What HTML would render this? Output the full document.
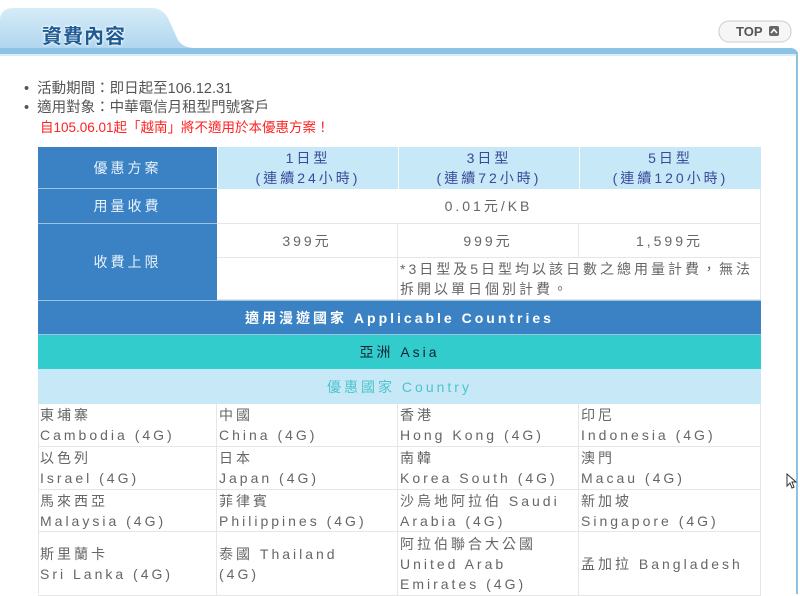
<!DOCTYPE html>
<html><head><meta charset="utf-8"><style>
*{margin:0;padding:0;box-sizing:border-box}
body{width:800px;height:594px;overflow:hidden;background:#fff;font-family:"Liberation Sans","Noto Sans CJK TC",sans-serif;position:relative}
.a{position:absolute}
.c{position:absolute;display:flex;align-items:center;justify-content:center;text-align:center;font-size:14px;letter-spacing:3px;line-height:20px;color:#666}
.l{justify-content:flex-start;text-align:left;padding-left:2px}
.db{background:#3a82c4;color:#e8f2fb}
.lb{background:#c7e8f7;color:#3a4a9a}
.bd{border-right:1px solid #e6e6e6;border-bottom:1px solid #e6e6e6}
</style></head><body>
<svg class="a" style="left:0;top:0" width="800" height="70">
<defs><linearGradient id="g" x1="0" y1="0" x2="0" y2="1"><stop offset="0" stop-color="#d6ecf8"/><stop offset="1" stop-color="#a9d2ec"/></linearGradient></defs>
<path d="M0 55 L0 20 Q0 8 14 8 L152 8 Q162 8 168 18 L178 40 Q183 48 195 48 L200 48 L200 55 Z" fill="url(#g)"/>
<path d="M0 48 L790 48 Q798 48 798 56 L0 56 Z" fill="#8cc2e2"/>
<rect x="0" y="54" width="796" height="2" fill="#d9ecf7"/>
<rect x="719" y="21" width="72" height="21" rx="10" fill="#f6f6f6" stroke="#ccc"/>
<text x="736" y="36" font-family="Liberation Sans" font-weight="bold" font-size="13" fill="#555">TOP</text>
<rect x="769" y="26" width="10" height="10" rx="2" fill="#666"/>
<path d="M771 33 L774 29.5 L777 33" stroke="#fff" stroke-width="1.6" fill="none"/>
</svg>
<div class="a" style="left:796px;top:52px;width:2px;height:542px;background:#8cc2e2"></div>
<div class="a" style="left:42px;top:20px;font-size:20px;font-weight:bold;color:#1e5a94;letter-spacing:1px;text-shadow:0 0 2px #fff,0 0 3px #fff">資費內容</div>
<div class="a" style="left:24px;top:80px;font-size:14.5px;color:#555;line-height:19px">
<div>•&nbsp;&nbsp;活動期間：即日起至106.12.31</div>
<div>•&nbsp;&nbsp;適用對象：中華電信月租型門號客戶</div>
<div style="color:#f22;font-size:13.5px;padding-left:16px">自105.06.01起「越南」將不適用於本優惠方案！</div>
</div>
<div class="c db" style="left:38px;top:147px;width:179px;height:42px;border-bottom:1px solid #9cc4e6">優惠方案</div>
<div class="c lb" style="left:217px;top:147px;width:181px;height:42px;border-left:1px solid #fff">1日型<br>(連續24小時)</div>
<div class="c lb" style="left:398px;top:147px;width:181px;height:42px;border-left:1px solid #fff">3日型<br>(連續72小時)</div>
<div class="c lb" style="left:579px;top:147px;width:182px;height:42px;border-left:1px solid #fff">5日型<br>(連續120小時)</div>
<div class="c db" style="left:38px;top:189px;width:179px;height:35px;border-bottom:1px solid #9cc4e6">用量收費</div>
<div class="c bd" style="left:217px;top:189px;width:544px;height:35px">0.01元/KB</div>
<div class="c db" style="left:38px;top:224px;width:179px;height:76px">收費上限</div>
<div class="c bd" style="left:217px;top:224px;width:181px;height:34px">399元</div>
<div class="c bd" style="left:398px;top:224px;width:181px;height:34px">999元</div>
<div class="c bd" style="left:579px;top:224px;width:182px;height:34px">1,599元</div>
<div class="c bd" style="left:217px;top:258px;width:181px;height:42px"></div>
<div class="c l bd" style="left:398px;top:258px;width:363px;height:42px;padding-right:6px">*3日型及5日型均以該日數之總用量計費，無法拆開以單日個別計費。</div>
<div class="c db" style="left:38px;top:300px;width:723px;height:35px;font-weight:bold;color:#fff;border-top:1px solid #9cc4e6;border-bottom:1px solid #9cc4e6">適用漫遊國家 Applicable Countries</div>
<div class="c" style="left:38px;top:335px;width:723px;height:34px;background:#33cccc;color:#123">亞洲 Asia</div>
<div class="c" style="left:38px;top:369px;width:723px;height:35px;background:#c7e8f7;color:#4cc4cc">優惠國家 Country</div>
<div class="c l bd" style="left:38px;top:404px;width:179px;height:43px">東埔寨<br>Cambodia (4G)</div>
<div class="c l bd" style="left:217px;top:404px;width:181px;height:43px">中國<br>China (4G)</div>
<div class="c l bd" style="left:398px;top:404px;width:181px;height:43px">香港<br>Hong Kong (4G)</div>
<div class="c l bd" style="left:579px;top:404px;width:182px;height:43px">印尼<br>Indonesia (4G)</div>
<div class="c l bd" style="left:38px;top:447px;width:179px;height:43px">以色列<br>Israel (4G)</div>
<div class="c l bd" style="left:217px;top:447px;width:181px;height:43px">日本<br>Japan (4G)</div>
<div class="c l bd" style="left:398px;top:447px;width:181px;height:43px">南韓<br>Korea South (4G)</div>
<div class="c l bd" style="left:579px;top:447px;width:182px;height:43px">澳門<br>Macau (4G)</div>
<div class="c l bd" style="left:38px;top:490px;width:179px;height:42px">馬來西亞<br>Malaysia (4G)</div>
<div class="c l bd" style="left:217px;top:490px;width:181px;height:42px">菲律賓<br>Philippines (4G)</div>
<div class="c l bd" style="left:398px;top:490px;width:181px;height:42px">沙烏地阿拉伯 Saudi Arabia (4G)</div>
<div class="c l bd" style="left:579px;top:490px;width:182px;height:42px">新加坡<br>Singapore (4G)</div>
<div class="c l bd" style="left:38px;top:532px;width:179px;height:64px">斯里蘭卡<br>Sri Lanka (4G)</div>
<div class="c l bd" style="left:217px;top:532px;width:181px;height:64px">泰國 Thailand<br>(4G)</div>
<div class="c l bd" style="left:398px;top:532px;width:181px;height:64px">阿拉伯聯合大公國<br>United Arab<br>Emirates (4G)</div>
<div class="c l bd" style="left:579px;top:532px;width:182px;height:64px">孟加拉 Bangladesh</div>
<div class="a" style="left:38px;top:404px;width:1px;height:190px;background:#e6e6e6"></div>
<svg class="a" style="left:786px;top:473px" width="12" height="18"><path d="M1 1 L1 13 L4 10 L6 15 L8 14 L6 9 L10 9 Z" fill="#fff" stroke="#333" stroke-width="1"/></svg>
</body></html>
